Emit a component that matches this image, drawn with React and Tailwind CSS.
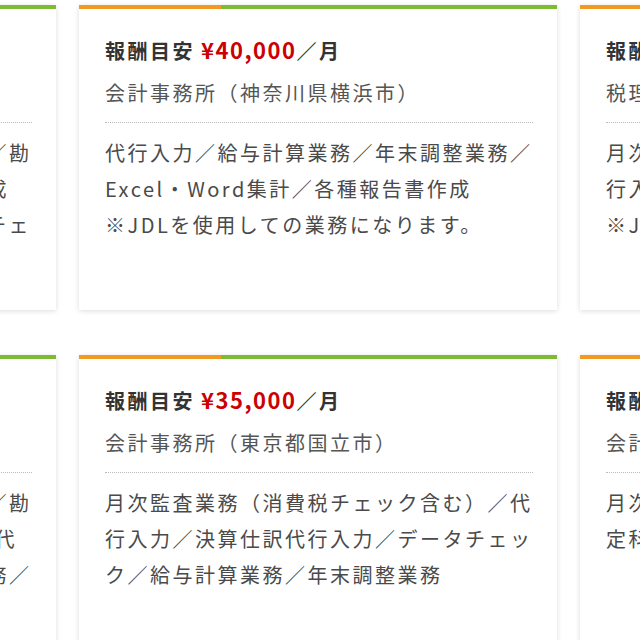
import React from "react";

const rows = [
  [
    {
      price: "30,000",
      office: "会計事務所（東京都港区）",
      desc: "代行入力／決算書作成／年末調整業務／勘定科目の確認作業／各種申告書類の作成\n※会計ソフトを使用しての入力データチェ",
    },
    {
      price: "40,000",
      office: "会計事務所（神奈川県横浜市）",
      desc: "代行入力／給与計算業務／年末調整業務／Excel・Word集計／各種報告書作成\n※JDLを使用しての業務になります。",
    },
    {
      price: "50,000",
      office: "税理士事務所（東京都渋谷区）",
      desc: "月次監査業務（消費税チェック含む）／代行入力／決算業務\n※JDLを使用しての業務になります。",
    },
  ],
  [
    {
      price: "30,000",
      office: "会計事務所（埼玉県さいたま市）",
      desc: "代行入力／決算書作成／年末調整業務／勘定科目のチェック／PC会計入力／記帳代\n行入力／決算仕訳入力／法人税申告業務／",
    },
    {
      price: "35,000",
      office: "会計事務所（東京都国立市）",
      desc: "月次監査業務（消費税チェック含む）／代行入力／決算仕訳代行入力／データチェック／給与計算業務／年末調整業務",
    },
    {
      price: "45,000",
      office: "会計事務所（千葉県千葉市）",
      desc: "月次監査業務／決算書作成／年末調整／勘定科目の確認業務",
    },
  ],
];

function Card({ price, office, desc }) {
  const lines = desc.split("\n");
  return (
    <div className="flex h-[305px] w-[478px] shrink-0 flex-col bg-white shadow-[0_1px_5px_rgba(0,0,0,0.14)]">
      {/* two-tone top bar */}
      <div className="flex h-[4px]">
        <div className="w-[142px] bg-[#f29a1f]" />
        <div className="flex-1 bg-[#7cbb32]" />
      </div>

      <div className="pl-[26px] pr-[24px] pt-[26px] tracking-[2.5px]">
        <p className="h-[32px] text-[20px] font-bold leading-[32px] text-[#333]">
          報酬目安
          <span className="ml-[6px] text-[22px] leading-none tracking-[1.5px] text-[#cc0000]">¥{price}</span>／月
        </p>
        <p className="mt-[10px] text-[20px] leading-[32px] text-[#555]">{office}</p>
        <div className="mt-[13px] border-t border-dotted border-[#bbb]" />
        <p className="mt-[12px] text-[20px] leading-[36px] text-[#4a4a4a]">
          {lines.map((l, i) => (
            <React.Fragment key={i}>
              {i > 0 && <br />}
              {l}
            </React.Fragment>
          ))}
        </p>
      </div>
    </div>
  );
}

export default function App() {
  return (
    <div className="h-[640px] w-[640px] overflow-hidden bg-white pt-[5px] font-['Noto_Sans_CJK_JP','Noto_Sans',sans-serif]">
      <div className="-ml-[422px] flex flex-col gap-[45px]">
        {rows.map((row, r) => (
          <div key={r} className="flex gap-[23px]">
            {row.map((c, i) => (
              <Card key={i} {...c} />
            ))}
          </div>
        ))}
      </div>
    </div>
  );
}
